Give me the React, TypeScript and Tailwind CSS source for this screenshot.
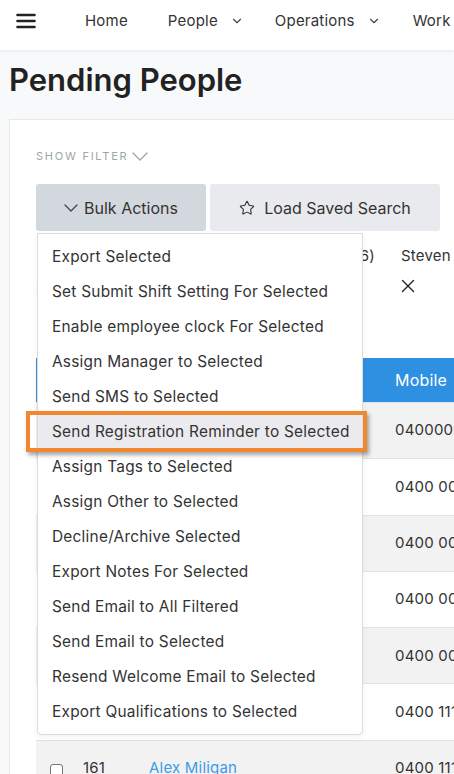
import { ChevronDown, Star, X } from "lucide-react";

const bulkActions = [
  "Export Selected",
  "Set Submit Shift Setting For Selected",
  "Enable employee clock For Selected",
  "Assign Manager to Selected",
  "Send SMS to Selected",
  "Send Registration Reminder to Selected",
  "Assign Tags to Selected",
  "Assign Other to Selected",
  "Decline/Archive Selected",
  "Export Notes For Selected",
  "Send Email to All Filtered",
  "Send Email to Selected",
  "Resend Welcome Email to Selected",
  "Export Qualifications to Selected",
];

const people = [
  { id: 167, name: "Steven Baker", mobile: "0400000000" },
  { id: 166, name: "Jordan Lee", mobile: "0400 000 001" },
  { id: 165, name: "Priya Nair", mobile: "0400 000 002" },
  { id: 164, name: "Tom Hughes", mobile: "0400 000 003" },
  { id: 163, name: "Mia Chen", mobile: "0400 000 004" },
  { id: 162, name: "Liam Walsh", mobile: "0400 111 222" },
  { id: 161, name: "Alex Miligan", mobile: "0400 111 333" },
];

const HIGHLIGHTED = "Send Registration Reminder to Selected";

function Hamburger() {
  return (
    <svg width="20" height="16" viewBox="0 0 20 16" className="shrink-0 text-[#222]">
      <path d="M1.5 2h17M1.5 8h17M1.5 14h17" stroke="currentColor" strokeWidth="2.6" strokeLinecap="round" />
    </svg>
  );
}

function ThinChevron({ className, w, h }: { className?: string; w: number; h: number }) {
  return (
    <svg width={w} height={h} viewBox={`0 0 ${w} ${h}`} className={`shrink-0 ${className ?? ""}`} fill="none">
      <path d={`M1 1L${w / 2} ${h - 1}L${w - 1} 1`} stroke="currentColor" strokeWidth="1.3" strokeLinecap="round" strokeLinejoin="round" />
    </svg>
  );
}

function NavBar() {
  return (
    <header className="relative z-10 flex h-[50px] items-center bg-white pb-[8px] pl-[16px] text-[15px] tracking-[0.2px] text-[#333] shadow-[0_1px_3px_rgba(0,0,0,0.08)] whitespace-nowrap">
      <Hamburger />
      <a className="ml-[49px] shrink-0">Home</a>
      <a className="ml-[40px] flex shrink-0 items-center">
        People
        <ChevronDown size={14} strokeWidth={2} className="ml-[12px] text-[#444]" />
      </a>
      <a className="ml-[31px] flex shrink-0 items-center">
        Operations
        <ChevronDown size={14} strokeWidth={2} className="ml-[12px] text-[#444]" />
      </a>
      <a className="ml-[32px] shrink-0">Work</a>
    </header>
  );
}

function BulkMenu() {
  return (
    <div className="absolute left-[1px] top-[calc(100%+2px)] z-20 w-[326px] rounded-b-[4px] border border-[#dcdcdc] bg-white py-[5px] shadow-[0_2px_6px_rgba(0,0,0,0.06)]">
      {bulkActions.map((label) => {
        const active = label === HIGHLIGHTED;
        return (
          <div
            key={label}
            className={`relative flex h-[35px] items-center pl-[14px] text-[15.4px] tracking-[0.25px] text-[#333] whitespace-nowrap ${active ? "bg-[#ebebef]" : ""}`}
          >
            {label}
            {active && (
              <span className="pointer-events-none absolute -top-[3px] -bottom-[3px] -left-[12px] -right-[5px] border-[4px] border-[#f0882f] shadow-[2px_3px_4px_rgba(0,0,0,0.35)]" />
            )}
          </div>
        );
      })}
    </div>
  );
}

function PeopleTable() {
  return (
    <div className="mt-[57px] w-[560px] text-[15px] tracking-[0.2px] text-[#333]">
      <div className="grid h-[44px] grid-cols-[39px_65px_240px_216px] items-center bg-[#2e90e0] text-[16px] text-white">
        <span />
        <span className="pl-[8px]">ID</span>
        <span className="pl-[9px]">Name</span>
        <span className="pl-[15px]">Mobile</span>
      </div>
      {people.map((p, i) => (
        <div
          key={p.id}
          className={`grid h-[56.3px] grid-cols-[39px_65px_240px_216px] items-center border-t border-[#e2e2e2] ${i % 2 === 0 ? "bg-[#f2f2f2]" : "bg-white"}`}
        >
          <span className="flex justify-center pl-[1px] pt-[4px]">
            <span className="h-[13px] w-[13px] rounded-[3px] border border-[#767676] bg-white" />
          </span>
          <span className="pl-[8px]">{p.id}</span>
          <span className="pl-[9px] text-[#3d9be9]">{p.name}</span>
          <span className="pl-[15px]">{p.mobile}</span>
        </div>
      ))}
    </div>
  );
}

export default function App() {
  return (
    <div className="h-[774px] w-full overflow-hidden bg-[#f8f9fa] font-['Inter',sans-serif]">
      <NavBar />
      <h1 className="mt-[11px] pl-[9px] text-[31px] leading-[37px] font-semibold text-[#222]">Pending People</h1>

      <section className="mt-[21px] ml-[9px] min-h-[700px] border-t border-l border-[#e8e8e8] bg-white pl-[26px]">
        <button className="flex items-center pt-[29px] text-[11px] leading-[14px] tracking-[0.16em] text-[#9aa7a7]">
          SHOW FILTER
          <ThinChevron w={16} h={9} className="ml-[4px] text-[#9aa7a7]" />
        </button>

        <div className="relative mt-[21px] flex gap-[4px]">
          <button className="flex h-[47px] w-[170px] shrink-0 items-center justify-center rounded-[3px] bg-[#d3d8de] text-[16px] text-[#333]">
            <ThinChevron w={14} h={8} className="mr-[6px] text-[#444]" />
            Bulk Actions
          </button>
          <button className="flex h-[47px] w-[230px] shrink-0 items-center justify-center rounded-[3px] bg-[#e9eaed] text-[16px] text-[#333]">
            <Star size={16} strokeWidth={1.6} className="mr-[9px]" />
            Load Saved Search
          </button>
          <BulkMenu />
        </div>

        <div className="mt-[10px] flex h-[30px] items-center whitespace-nowrap text-[15px] tracking-[0.2px] text-[#333]">
          <span className="w-[339px] shrink-0 text-right">Created By: Jane Doe (146)</span>
          <span className="ml-[26px] shrink-0">Steven Smith</span>
        </div>
        <div className="flex h-[30px] items-center whitespace-nowrap text-[15px] text-[#999]">
          <span className="w-[361px] shrink-0">Status: Pending</span>
          <X size={22} strokeWidth={1.5} className="shrink-0 text-[#222]" />
        </div>

        <PeopleTable />
      </section>
    </div>
  );
}
